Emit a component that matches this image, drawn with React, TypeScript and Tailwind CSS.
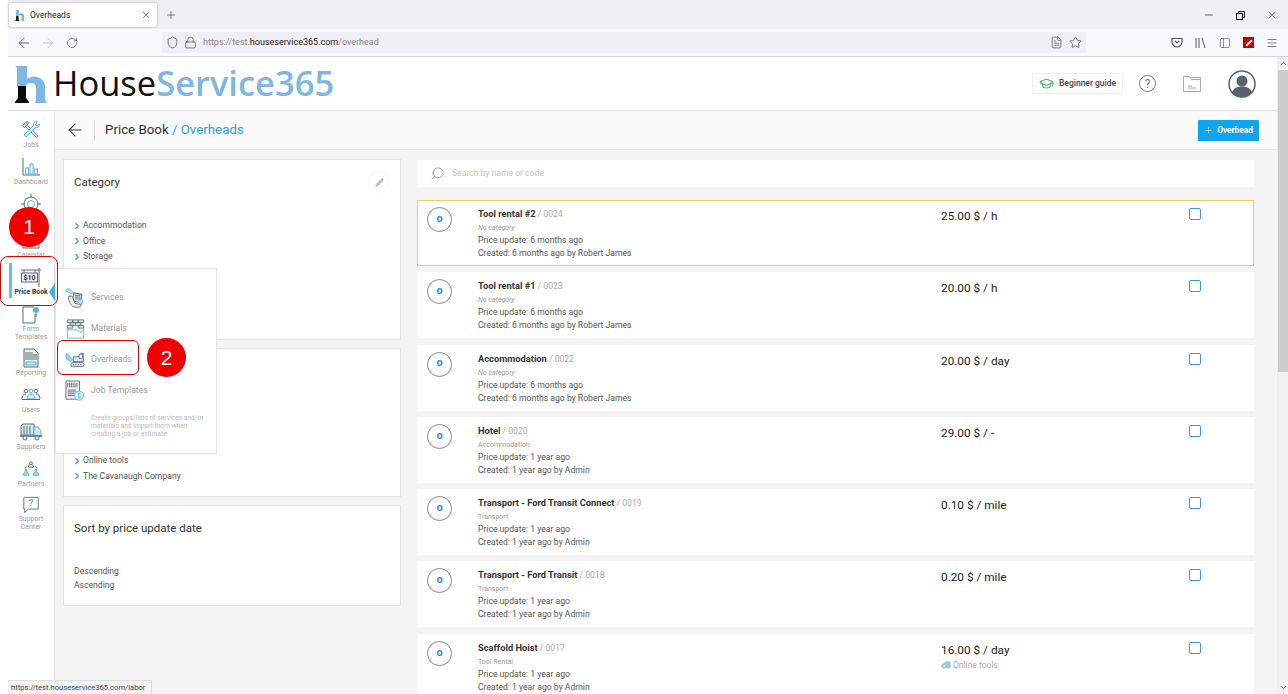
import React from "react";
import { ArrowLeft, ArrowRight, RotateCw, Shield, Lock, X, Plus, Minus, Star, Menu, Search, Pencil, ChevronRight, GraduationCap, FileText, PanelLeft, ChevronUp, ChevronDown, Truck } from "lucide-react";

const D = "#5f6b75";
const B = "#56b7dc";

const HLogo = ({ s = 32, h = 37 }: { s?: number; h?: number }) => (
  <svg width={s} height={h} viewBox="0 0 32 37">
    <path d="M0 0h12v13c3-2 6-3 10-2 5 1 8 5 8 10v13l2 3H20l1-3V22c0-3-2-5-5-5-3 0-5 1-6 4H2V2z" fill="#7db7e2" />
    <path d="M3 20h8v12l3 4v1H0v-1l3-4z" fill="#0b0b0b" />
  </svg>
);

const Icons: Record<string, React.ReactNode> = {
  jobs: (
    <svg width="20" height="20" viewBox="0 0 20 20" fill="none" strokeWidth="1">
      <path d="M4 3l13 13-1.500 1.500L2.500 4.500z" stroke="#7d8790" fill="#e8edf0" />
      <path d="M1.500 5.500L6 1l2 2-4.500 4.500z" stroke="#7d8790" fill="#c8d0d5" />
      <path d="M16 1.500a3 3 0 0 0-3.500 4L3 15l2 2 9.500-9.500a3 3 0 0 0 4-3.500l-2 2-2-1z" stroke={B} fill="#dff1f8" />
    </svg>
  ),
  dashboard: (
    <svg width="20" height="20" viewBox="0 0 20 20" fill="none" strokeWidth="1">
      <path d="M2 1v17h17" stroke={D} />
      <rect x="4.500" y="11" width="3" height="6" stroke={B} />
      <rect x="9" y="7" width="3" height="10" stroke={B} />
      <rect x="13.500" y="12" width="3" height="5" stroke={B} />
    </svg>
  ),
  target: (
    <svg width="20" height="20" viewBox="0 0 20 20" fill="none" strokeWidth="1">
      <circle cx="10" cy="10" r="7" stroke={D} />
      <circle cx="10" cy="10" r="3.500" stroke={B} />
      <path d="M10 0v4M10 16v4M0 10h4M16 10h4" stroke={D} />
    </svg>
  ),
  calendar: (
    <svg width="20" height="20" viewBox="0 0 20 20" fill="none" strokeWidth="1">
      <rect x="2" y="3" width="16" height="15" stroke={D} />
      <path d="M2 7h16" stroke={B} />
    </svg>
  ),
  price: (
    <svg width="22" height="21" viewBox="0 0 22 21" fill="none" strokeWidth="1">
      <path d="M19 1v19M1 3h20" stroke={D} />
      <path d="M4 3v3M15 3v3" stroke={D} />
      <rect x="1.500" y="6" width="16" height="9" fill="#eef2f4" stroke={D} />
      <text x="9.500" y="13.300" textAnchor="middle" fontSize="7" fontWeight="700" fill="#333" fontFamily="Roboto, sans-serif">$10</text>
    </svg>
  ),
  form: (
    <svg width="20" height="20" viewBox="0 0 20 20" fill="none" strokeWidth="1">
      <path d="M13 3H2v16h12V10" stroke={D} />
      <circle cx="15" cy="6" r="3" fill={B} />
      <path d="M15 9v4" stroke={D} />
    </svg>
  ),
  reporting: (
    <svg width="18" height="20" viewBox="0 0 18 20" fill="none" strokeWidth="1">
      <path d="M2 1h10l4 4v14H2z" fill="#eef1f3" stroke={D} />
      <path d="M4 4v8M6 4v8M8 4v8M10 4v8M12 6v6M14 6v6" stroke={D} />
      <rect x="4" y="14" width="10" height="3" fill="#cfe9f3" stroke={B} />
    </svg>
  ),
  users: (
    <svg width="20" height="14" viewBox="0 0 20 14" fill="none" strokeWidth="1">
      <circle cx="5" cy="3" r="1.800" stroke={D} />
      <circle cx="15" cy="3" r="1.800" stroke={D} />
      <circle cx="10" cy="3" r="1.800" stroke={B} />
      <path d="M1 11c0-3 1.500-5 4-5M19 11c0-3-1.500-5-4-5" stroke={D} />
      <path d="M6 11c0-3 1.500-5 4-5s4 2 4 5z" stroke={B} fill="#dff1f8" />
      <path d="M1 11.500h18" stroke={D} />
    </svg>
  ),
  suppliers: (
    <svg width="22" height="18" viewBox="0 0 22 18" fill="none" strokeWidth="1">
      <path d="M1 3l2-2h11v11H1z" fill="#dde8ee" stroke={D} />
      <path d="M4 3v8M7 3v8M10 3v8" stroke={D} />
      <path d="M14 4h4l3 4v5h-7z" fill="#cfe9f3" stroke={B} />
      <path d="M0 13h22" stroke={D} strokeWidth="1.500" />
      <circle cx="5" cy="15" r="2" fill="#fff" stroke={D} />
      <circle cx="17" cy="15" r="2" fill="#fff" stroke={D} />
    </svg>
  ),
  partners: (
    <svg width="18" height="18" viewBox="0 0 20 18" fill="none" strokeWidth="1">
      <circle cx="10" cy="2.500" r="1.500" stroke={D} />
      <path d="M7 7c0-2 1-3 3-3s3 1 3 3zM3 8l2-2M17 8l-2-2" stroke={D} />
      <circle cx="4.500" cy="10.500" r="1.500" fill={B} />
      <circle cx="15.500" cy="10.500" r="1.500" fill={B} />
      <path d="M1.500 16c0-2 1-4 3-4s3 2 3 4zM12.500 16c0-2 1-4 3-4s3 2 3 4z" fill="#9ed5ea" stroke={B} />
    </svg>
  ),
  support: (
    <svg width="18" height="18" viewBox="0 0 20 19" fill="none" strokeWidth="1">
      <path d="M2 1h16v13H7l-4 4v-4H2z" stroke={D} fill="#fff" />
      <text x="10" y="11" textAnchor="middle" fontSize="10" fontWeight="700" fill={B} fontFamily="Roboto, sans-serif">?</text>
    </svg>
  ),
  services: (
    <svg width="22" height="24" viewBox="0 0 24 24" fill="none" strokeWidth="1">
      <path d="M2 3c2-2 5-1 6 1l2 2-2 2-2-2c-2 0-4-1-4-3z" fill="#bfe3f1" stroke={B} />
      <rect x="10" y="7" width="9" height="9" transform="rotate(10 14 11)" fill="#e5e9ec" stroke={D} />
      <path d="M12 9h6M12 11h6M12 13h6" stroke={D} />
      <path d="M5 10c0 6 2 11 7 12h5l2-3-7-1-3-8z" fill="#eef1f3" stroke={D} />
      <circle cx="18" cy="16" r="2.500" fill="#bfe3f1" stroke={B} />
    </svg>
  ),
  materials: (
    <svg width="19" height="20" viewBox="0 0 20 22" fill="none" strokeWidth="1">
      <path d="M1 1h6v3H1zM7 1h6v3H7zM13 1h6v3h-6zM4 4h6v3H4zM10 4h6v3h-6zM1 7h6v3H1zM13 7h6v3h-6z" stroke={D} fill="#e5e9ec" />
      <path d="M1 10v11h18V10" stroke={B} />
      <path d="M1 12h11l3 3 4-3" stroke={B} />
    </svg>
  ),
  overheads: (
    <svg width="20" height="16" viewBox="0 0 24 18" fill="none" strokeWidth="1">
      <path d="M2 1l7 7-2 3-5-3-1-4z" fill="#9ed5ea" stroke={B} />
      <path d="M10 5h8l1-4h3v10H10z" fill="#cfe9f3" stroke={D} />
      <path d="M17 2h4v5h-4z" fill="#fff" stroke={D} />
      <rect x="7" y="12" width="16" height="5" rx="2.500" fill="#dfe5e8" stroke={D} />
      <path d="M10 14.500h0M13 14.500h0M16 14.500h0M19 14.500h0" stroke={D} strokeWidth="1.500" strokeLinecap="round" />
    </svg>
  ),
  jobTemplates: (
    <svg width="20" height="22" viewBox="0 0 22 24" fill="none" strokeWidth="1">
      <path d="M1 1h15v20H1z" fill="#eef1f3" stroke={D} />
      <path d="M3 3v5M5 3v5M7 3v5M9 3v5M11 3v5M13 3v5M3 11h9M3 13h9M3 15h7M3 17h7" stroke={D} />
      <circle cx="15.500" cy="17" r="5" fill="#dff1f8" stroke={B} />
      <text x="15.500" y="19.500" textAnchor="middle" fontSize="7" fontWeight="700" fill={B} fontFamily="Roboto, sans-serif">$</text>
    </svg>
  ),
};

const navItems = [
  { k: "jobs", label: ["Jobs"], box: "h-[23px]", h: "h-[37px]" },
  { k: "dashboard", label: ["Dashboard"], box: "h-[23px]", h: "h-[37px]" },
  { k: "target", label: [], box: "h-[23px]", h: "h-[37px]" },
  { k: "calendar", label: ["Calendar"], box: "h-[22px]", h: "h-[37px]" },
  { k: "price", label: ["Price Book"], active: true, box: "h-[23px]", h: "h-[37px]" },
  { k: "form", label: ["Form", "Templates"], box: "h-[22px]", h: "h-[43px]" },
  { k: "reporting", label: ["Reporting"], box: "h-[23px]", h: "h-[37px]" },
  { k: "users", label: ["Users"], box: "h-[23px]", h: "h-[37px]" },
  { k: "suppliers", label: ["Suppliers"], box: "h-[23px]", h: "h-[37px]" },
  { k: "partners", label: ["Partners"], box: "h-[23px]", h: "h-[37px]" },
  { k: "support", label: ["Support", "Center"], box: "h-[24px]", h: "h-[37px]" },
];

const rows = [
  { t: "Tool rental #2", c: "0024", cat: "No category", it: true, up: "6 months ago", cr: "6 months ago by Robert James", p: "25.00 $ / h", hl: true },
  { t: "Tool rental #1", c: "0023", cat: "No category", it: true, up: "6 months ago", cr: "6 months ago by Robert James", p: "20.00 $ / h" },
  { t: "Accommodation", c: "0022", cat: "No category", it: true, up: "6 months ago", cr: "6 months ago by Robert James", p: "20.00 $ / day" },
  { t: "Hotel", c: "0020", cat: "Accommodation", up: "1 year ago", cr: "1 year ago by Admin", p: "29.00 $ / -" },
  { t: "Transport - Ford Transit Connect", c: "0019", cat: "Transport", up: "1 year ago", cr: "1 year ago by Admin", p: "0.10 $ / mile" },
  { t: "Transport - Ford Transit", c: "0018", cat: "Transport", up: "1 year ago", cr: "1 year ago by Admin", p: "0.20 $ / mile" },
  { t: "Scaffold Hoist", c: "0017", cat: "Tool Rental", up: "1 year ago", cr: "1 year ago by Admin", p: "16.00 $ / day", sup: "Online tools" },
];

const Cat = ({ children }: { children: React.ReactNode }) => (
  <div className="flex h-[15.500px] items-center text-[8.600px] text-[#555]">
    <ChevronRight size={10} strokeWidth={3} className="mr-[1px] ml-[-2px] text-[#3f9bd9]" />
    <span>{children}</span>
  </div>
);

const Menu2 = ({ k, label }: { k: string; label: string }) => (
  <div className="flex h-[31px] items-center">
    <div className="flex w-[34px] shrink-0 items-center justify-center pl-[2px]">{Icons[k]}</div>
    <span className="text-[8.600px] text-[#9a9a9a]">{label}</span>
  </div>
);

export default function App() {
  return (
    <div className="relative flex h-[694px] w-[1288px] overflow-hidden bg-white font-['Roboto',sans-serif]">
      <div className="w-[8px] shrink-0 bg-white" />
      <div className="flex min-w-0 flex-1 flex-col">
        {/* tab strip */}
        <div className="flex h-[29px] shrink-0 items-center bg-[#f0f0f4] pt-[1px]">
          <div className="ml-[1px] flex h-[24px] w-[148px] items-center rounded-[3px] bg-white pl-[6px] pr-[6px] shadow-[0_0_3px_rgba(0,0,0,0.3)]">
            <HLogo s={10} h={11} />
            <span className="ml-[5px] flex-1 text-[8.500px] text-[#222]">Overheads</span>
            <X size={10} strokeWidth={1.500} className="text-[#333]" />
          </div>
          <Plus size={12} strokeWidth={1.500} className="ml-[8px] text-[#555]" />
          <div className="flex-1" />
          <Minus size={12} strokeWidth={1.500} className="text-[#333]" />
          <svg width="9" height="9" viewBox="0 0 9 9" fill="none" stroke="#222" className="ml-[21px]">
            <rect x="0.500" y="2.500" width="6" height="6" strokeWidth="1.200" />
            <path d="M2.500 2.500V0.500h6v6H6.500" />
          </svg>
          <X size={12} strokeWidth={1.200} className="ml-[21px] mr-[10px] text-[#333]" />
        </div>
        {/* toolbar */}
        <div className="flex h-[28px] shrink-0 items-center border-b border-[#d4d4d6] bg-[#f9f9fb]">
          <ArrowLeft size={16} strokeWidth={1.400} className="ml-[8px] text-[#555]" />
          <ArrowRight size={16} strokeWidth={1.400} className="ml-[8px] text-[#bbb]" />
          <RotateCw size={12} strokeWidth={1.500} className="ml-[10px] text-[#555]" />
          <div className="ml-[84px] flex h-[21px] w-[924px] shrink-0 items-center rounded-[2px] bg-[#f0f0f4] pl-[4px] pr-[4px]">
            <Shield size={13} strokeWidth={1.400} className="text-[#555]" />
            <Lock size={13} strokeWidth={1.400} className="ml-[5px] text-[#555]" />
            <span className="ml-[6px] flex-1 text-[9px] text-[#8a8a8e]">
              https://test.<span className="text-[#222]">houseservice365.com</span>/overhead
            </span>
            <FileText size={13} strokeWidth={1.400} className="text-[#555]" />
            <Star size={13} strokeWidth={1.400} className="ml-[6px] text-[#555]" />
          </div>
          <div className="flex-1" />
          <svg width="12" height="11" viewBox="0 0 12 11" fill="none" stroke="#555" strokeWidth="1.200">
            <path d="M1 1.500h10v3.500a5 5 0 0 1-10 0z" />
            <path d="M3.800 4l2.200 2 2.200-2" />
          </svg>
          <svg width="11" height="10" viewBox="0 0 11 10" fill="none" stroke="#555" strokeWidth="1" className="ml-[12.500px]">
            <path d="M1 0v10M4 0v10M7 0l3 10" />
          </svg>
          <PanelLeft size={12} strokeWidth={1.300} className="ml-[12.500px] text-[#555]" />
          <div className="ml-[12.500px] flex h-[11px] w-[11px] items-center justify-center bg-[#c80000]">
            <div className="h-[1.500px] w-[8px] -rotate-45 bg-white" />
          </div>
          <Menu size={12} strokeWidth={1.500} className="ml-[12px] mr-[10px] text-[#555]" />
        </div>

        <div className="flex min-h-0 flex-1">
          <div className="flex min-w-0 flex-1 flex-col">
            {/* app header */}
            <div className="flex h-[54px] shrink-0 items-center border-b border-[#e2e2e2] bg-white">
              <div className="ml-[7px] mt-[2px]"><HLogo /></div>
              <div className="ml-[6px] text-[34.500px] leading-none font-['Open_Sans',sans-serif]">
                <span className="text-[#111]">House</span><span className="font-semibold text-[#7db7e2]">Service365</span>
              </div>
              <div className="flex-1" />
              <div className="flex h-[21px] w-[91px] items-center rounded-[2px] border border-[#eee] pl-[6px]">
                <GraduationCap size={15} strokeWidth={2} className="text-[#5db870]" />
                <span className="ml-[5px] text-[8.500px] font-medium text-[#444]">Beginner guide</span>
              </div>
              <div className="ml-[16px] flex h-[17px] w-[17px] items-center justify-center rounded-full border border-[#777] text-[12px] text-[#777]">?</div>
              <svg width="18" height="16" viewBox="0 0 18 16" fill="none" stroke="#a8a8a8" strokeWidth="1" className="ml-[27px]">
                <path d="M0.500 15.500V0.500h6l2 3h9v12z" />
                <path d="M8.500 1.500h9v2M5 10h4M5 12h8" />
              </svg>
              <svg width="28" height="28" viewBox="0 0 28 28" className="ml-[27px] mr-[21px]">
                <circle cx="14" cy="14" r="13" fill="#fff" stroke="#5a6270" strokeWidth="1.500" />
                <circle cx="14" cy="11" r="5.500" fill="#5a6270" />
                <path d="M4 22.500c1-4 5-6 10-6s9 2 10 6a13 13 0 0 1-20 0z" fill="#5a6270" />
              </svg>
            </div>

            <div className="flex min-h-0 flex-1">
              {/* sidebar */}
              <div className="flex w-[47px] shrink-0 flex-col items-center border-r border-[#e2e2e2] bg-white pt-[7px]">
                {navItems.map((n) => (
                  <div key={n.k} className={`flex w-full flex-col items-center ${n.h}`}>
                    <div className={`flex items-center justify-center ${n.box}`}>{Icons[n.k]}</div>
                    {n.label.map((l) => (
                      <div key={l} className={n.active ? "mt-[-1px] text-[6.800px] leading-[8px] font-bold text-[#333]" : "text-[7px] leading-[8px] text-[#9a9a9a]"}>{l}</div>
                    ))}
                  </div>
                ))}
              </div>

              <div className="flex min-w-0 flex-1 flex-col bg-[#f4f4f4]">
                {/* subheader */}
                <div className="flex h-[39px] shrink-0 items-center border-b border-[#e6e6e6] bg-[#fafafa]">
                  <ArrowLeft size={20} strokeWidth={1.300} className="ml-[9.500px] text-[#333]" />
                  <div className="ml-[9.500px] h-[21px] w-px bg-[#ddd]" />
                  <div className="ml-[10px] text-[13.300px] text-[#333]">
                    Price Book <span className="text-[#2f9ee0]">/ Overheads</span>
                  </div>
                  <div className="flex-1" />
                  <div className="mr-[18px] flex h-[21px] w-[61px] items-center justify-center rounded-[1px] bg-[#0ea5ee] text-[8.300px] font-bold text-white">
                    <Plus size={9} strokeWidth={1.500} className="mr-[4px]" />
                    Overhead
                  </div>
                </div>

                <div className="flex min-h-0 flex-1">
                  {/* filters */}
                  <div className="ml-[8px] flex w-[338px] shrink-0 flex-col gap-[8px] pt-[9px]">
                    <div className="relative h-[181px] border border-[#e3e3e3] bg-white px-[10px] pt-[15px]">
                      <div className="text-[11.500px] leading-[15px] text-[#333]">Category</div>
                      <div className="absolute right-[11px] top-[12px] flex h-[20px] w-[20px] items-center justify-center rounded-full bg-white shadow-[0_0_3px_rgba(0,0,0,0.08)]">
                        <Pencil size={9} className="fill-[#bbb] text-[#bbb]" />
                      </div>
                      <div className="mt-[28px]">
                        <Cat>Accommodation</Cat>
                        <Cat>Office</Cat>
                        <Cat>Storage</Cat>
                      </div>
                    </div>
                    <div className="flex h-[149px] flex-col justify-end border border-[#e3e3e3] bg-white px-[10px] pb-[12px]">
                      <Cat>Online tools</Cat>
                      <Cat>The Cavanaugh Company</Cat>
                    </div>
                    <div className="h-[101px] border border-[#e3e3e3] bg-white px-[10px] pt-[15px]">
                      <div className="text-[11.500px] leading-[15px] text-[#333]">Sort by price update date</div>
                      <div className="mt-[28px] text-[8.600px] leading-[14px] text-[#555]">Descending</div>
                      <div className="text-[8.600px] leading-[14px] text-[#555]">Ascending</div>
                    </div>
                  </div>

                  {/* list */}
                  <div className="ml-[16px] flex w-[837px] shrink-0 flex-col overflow-hidden pt-[10px]">
                    <div className="flex h-[27px] shrink-0 items-center bg-white pl-[13px]">
                      <Search size={15} strokeWidth={1.100} className="-scale-x-100 text-[#777]" />
                      <span className="ml-[7px] text-[8.600px] text-[#c4c4c4]">Search by name or code</span>
                    </div>
                    <div className="mt-[13px] flex flex-col gap-[6.300px]">
                      {rows.map((r) => (
                        <div key={r.c} className={r.hl ? "flex h-[66px] shrink-0 bg-white ring-1 ring-inset ring-[#eccb60]" : "flex h-[66px] shrink-0 bg-white"}>
                          <div className="w-[61px] shrink-0 pl-[10px] pt-[7px]">
                            <div className="flex h-[25px] w-[25px] items-center justify-center rounded-full border border-[#888] pb-[1px] text-[11px] font-bold text-[#2f8fe0]">o</div>
                          </div>
                          <div className="w-[463px] shrink-0 pt-[7px] text-[8.600px] leading-[13px] text-[#555]">
                            <div>
                              <span className="text-[9.300px] font-bold text-[#333]">{r.t}</span>
                              <span className="text-[#aaa]"> / {r.c}</span>
                            </div>
                            <div className={r.it ? "relative top-[1px] text-[7px] italic text-[#999]" : "relative top-[1px] text-[7px] text-[#999]"}>{r.cat}</div>
                            <div>Price update: {r.up}</div>
                            <div>Created: {r.cr}</div>
                          </div>
                          <div className="w-[248px] shrink-0 pt-[9px]">
                            <div className="text-[11.800px] leading-[14px] text-[#222]">{r.p}</div>
                            {r.sup && (
                              <div className="mt-[2px] flex items-center text-[8.500px] text-[#aaa]">
                                <Truck size={10} className="mr-[2px] -scale-x-100 fill-[#9cc9ea] text-[#9cc9ea]" />
                                {r.sup}
                              </div>
                            )}
                          </div>
                          <div className="pt-[8px]">
                            <div className="h-[12px] w-[12px] rounded-[2px] border-[1.500px] border-[#3f94dc]" />
                          </div>
                        </div>
                      ))}
                    </div>
                  </div>
                </div>
              </div>
            </div>
          </div>

          {/* scrollbar */}
          <div className="flex w-[11px] shrink-0 flex-col items-center border-l border-[#eee] bg-[#f1f1f1]">
            <ChevronUp size={9} strokeWidth={2.500} className="mt-[2px] text-[#555]" />
            <div className="mt-[2px] h-[302px] w-full bg-[#cdcdcd]" />
            <div className="flex-1" />
            <ChevronDown size={9} strokeWidth={2.500} className="mb-[2px] text-[#555]" />
          </div>
        </div>
      </div>

      {/* overlay: hovered Price Book marker */}
      <div className="absolute left-[9px] top-[263px] h-[35px] w-[3px] bg-[#5cc3ea]" />
      <div className="absolute left-[49px] top-[283px] h-0 w-0 border-y-[9px] border-r-[6px] border-y-transparent border-r-[#3fb3e6]" />

      {/* overlay: flyout menu */}
      <div className="absolute left-[55px] top-[268px] h-[186px] w-[162px] border border-[#e6e6e6] bg-white pl-[1px] pt-[13px] shadow-[0_0_3px_rgba(0,0,0,0.08)]">
        <Menu2 k="services" label="Services" />
        <Menu2 k="materials" label="Materials" />
        <Menu2 k="overheads" label="Overheads" />
        <Menu2 k="jobTemplates" label="Job Templates" />
        <div className="ml-[34px] mt-[8px] w-[122px] text-[6.700px] leading-[8px] text-[#bcbcbc]">
          Create groups/lists of services and/or materials and import them when creating a job or estimate
        </div>
      </div>

      {/* overlay: annotations */}
      <div className="absolute left-[0px] top-[256px] h-[50px] w-[58px] rounded-[8px] border border-[#e00000]" />
      <div className="absolute left-[57px] top-[340px] h-[35px] w-[82px] rounded-[6px] border border-[#e00000]" />
      <div className="absolute left-[9px] top-[207px] flex h-[40px] w-[40px] items-center justify-center rounded-full bg-[#f00000] font-['Liberation_Sans',sans-serif] text-[21px] text-white">1</div>
      <div className="absolute left-[147px] top-[338px] flex h-[39px] w-[39px] items-center justify-center rounded-full bg-[#f00000] font-['Liberation_Sans',sans-serif] text-[21px] text-white">2</div>

      {/* overlay: status tooltip */}
      <div className="absolute bottom-0 left-[8px] flex h-[14px] w-[144px] items-center border-r border-t border-[#ddd] bg-[#f4f4f4] pl-[3px] text-[7.600px] text-[#444]">
        https://test.houseservice365.com/labor
      </div>
    </div>
  );
}
